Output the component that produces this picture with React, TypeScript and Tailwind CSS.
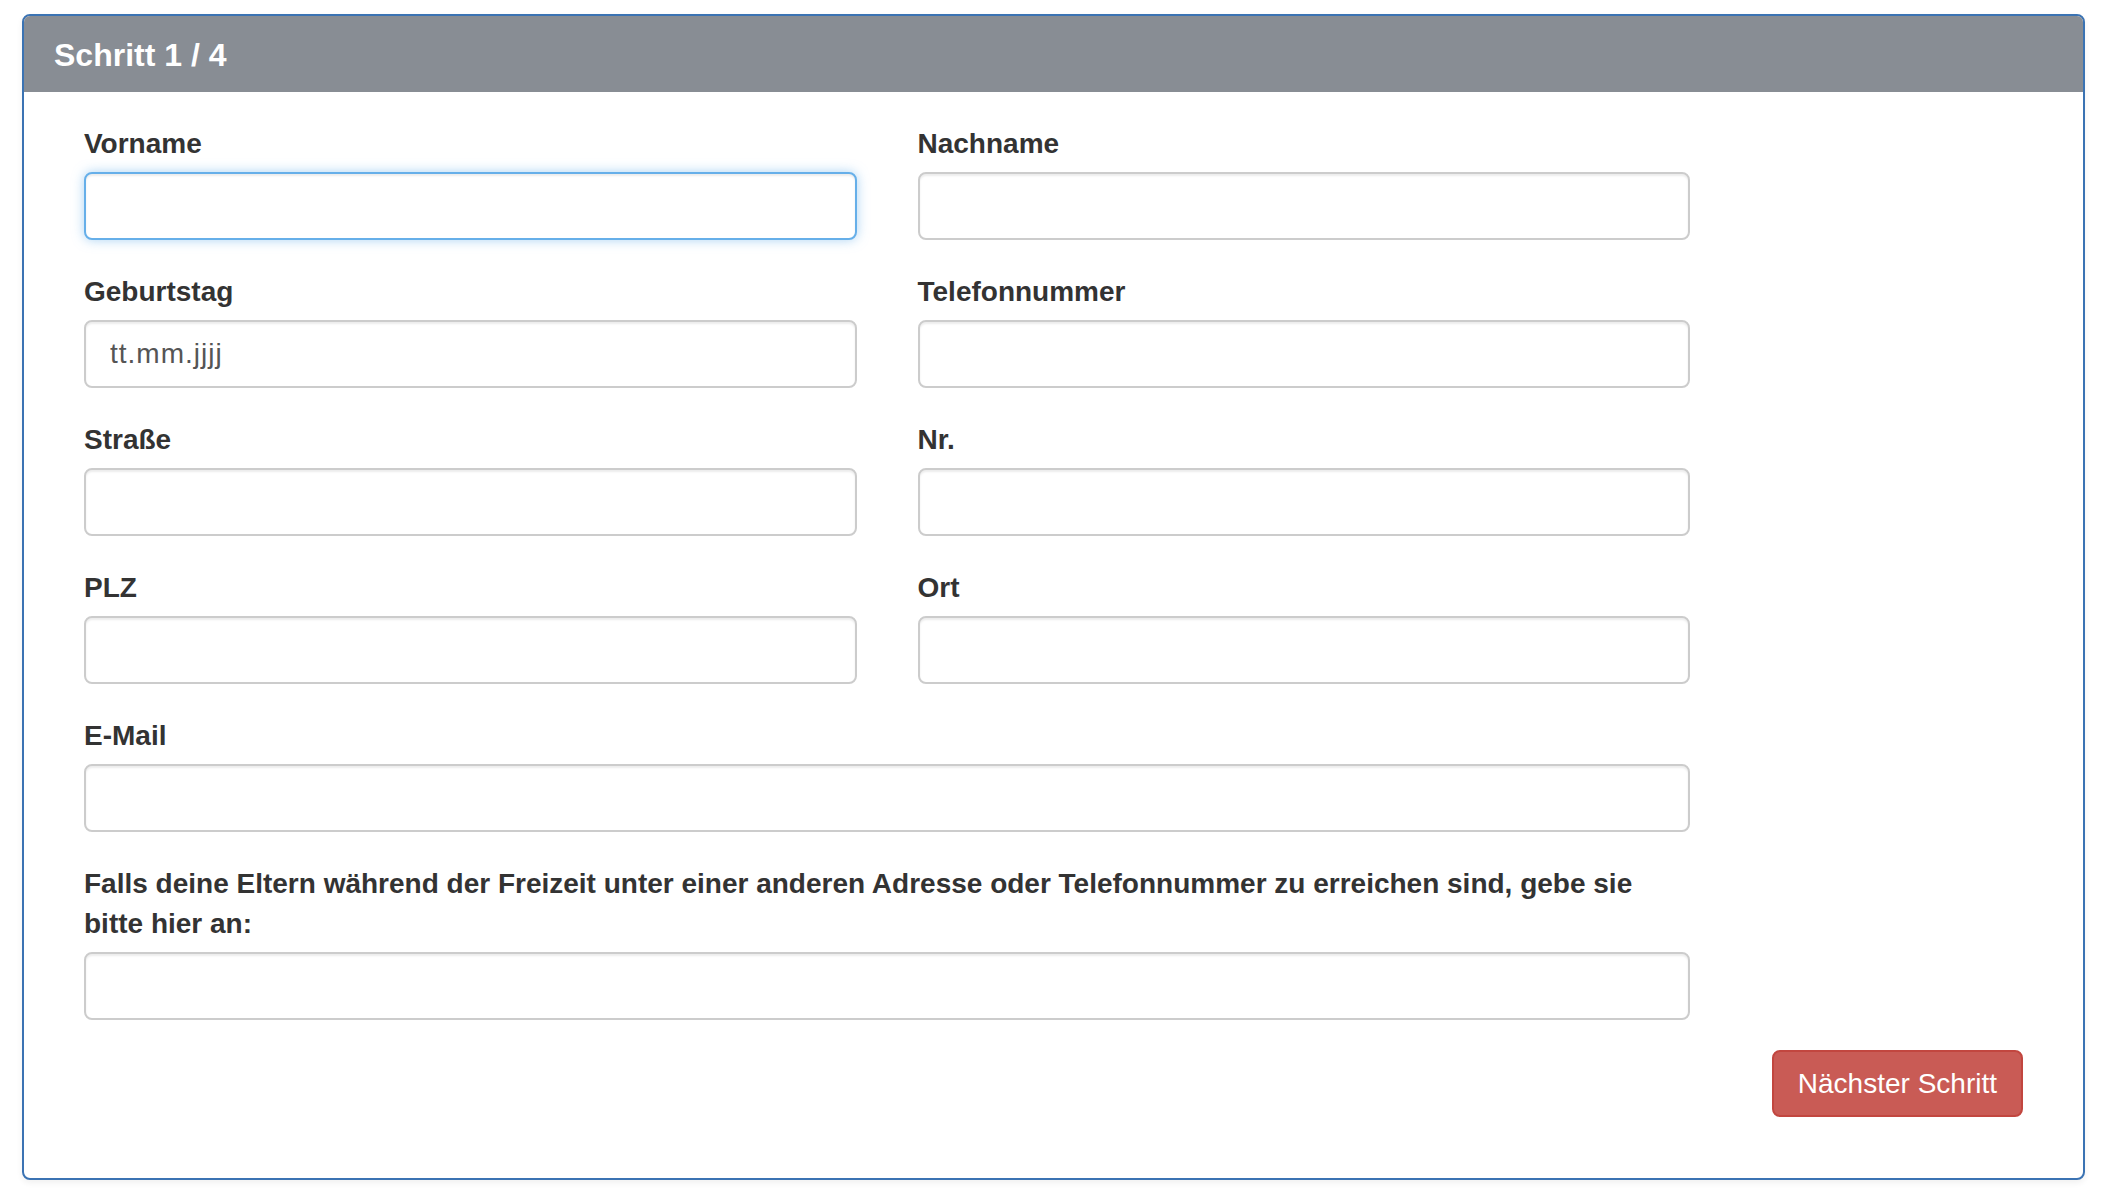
import type { ReactNode } from "react";

const FONT = "font-['Liberation_Sans',Arial,sans-serif]";

const INPUT_BASE =
  "block h-[68px] w-full rounded-[8px] border-2 bg-white px-[24px] text-[28px] text-[#555] outline-none placeholder:text-[#555] placeholder:tracking-[1px]";

function Field({
  label,
  focused,
  placeholder,
  className,
}: {
  label: ReactNode;
  focused?: boolean;
  placeholder?: string;
  className?: string;
}) {
  return (
    <div className={`mb-[30px] ${className ?? ""}`}>
      <label className="mb-[8px] block pt-[2px] text-[28px] font-bold leading-[40px] text-[#333]">
        {label}
      </label>
      <input
        type="text"
        placeholder={placeholder}
        className={`${INPUT_BASE} ${
          focused
            ? "border-[#66afe9] shadow-[inset_0_2px_2px_rgba(0,0,0,0.075),0_0_12px_rgba(102,175,233,0.55)]"
            : "border-[#ccc] shadow-[inset_0_2px_2px_rgba(0,0,0,0.075)]"
        }`}
      />
    </div>
  );
}

export default function App() {
  return (
    <div className={`min-h-screen bg-white pt-[14px] ${FONT}`}>
      <div className="mx-[22px] w-[2063px] rounded-[8px] border-2 border-[#3b73b3] bg-white shadow-[0_3px_6px_rgba(0,0,0,0.06)]">
        <div className="flex h-[76px] items-center rounded-t-[6px] bg-[#888d94] px-[30px] pt-[2px]">
          <h3 className="text-[32px] font-bold text-white">Schritt 1 / 4</h3>
        </div>

        <div className="px-[60px] pb-[61px] pt-[30px]">
          <form className="grid w-[1606px] grid-cols-2 gap-x-[61px]">
            <Field label="Vorname" focused />
            <Field label="Nachname" />
            <Field label="Geburtstag" placeholder="tt.mm.jjjj" />
            <Field label="Telefonnummer" />
            <Field label="Straße" />
            <Field label="Nr." />
            <Field label="PLZ" />
            <Field label="Ort" />
            <Field label="E-Mail" className="col-span-2" />
            <Field
              className="col-span-2"
              label={
                <>
                  Falls deine Eltern während der Freizeit unter einer anderen Adresse oder
                  Telefonnummer zu erreichen sind, gebe sie
                  <br />
                  bitte hier an:
                </>
              }
            />
          </form>

          <div className="flex justify-end">
            <button
              type="button"
              className="h-[67px] rounded-[8px] border-2 border-[#c2463f] bg-[#c95b55] px-[24px] text-[28px] text-white"
            >
              Nächster Schritt
            </button>
          </div>
        </div>
      </div>
    </div>
  );
}
